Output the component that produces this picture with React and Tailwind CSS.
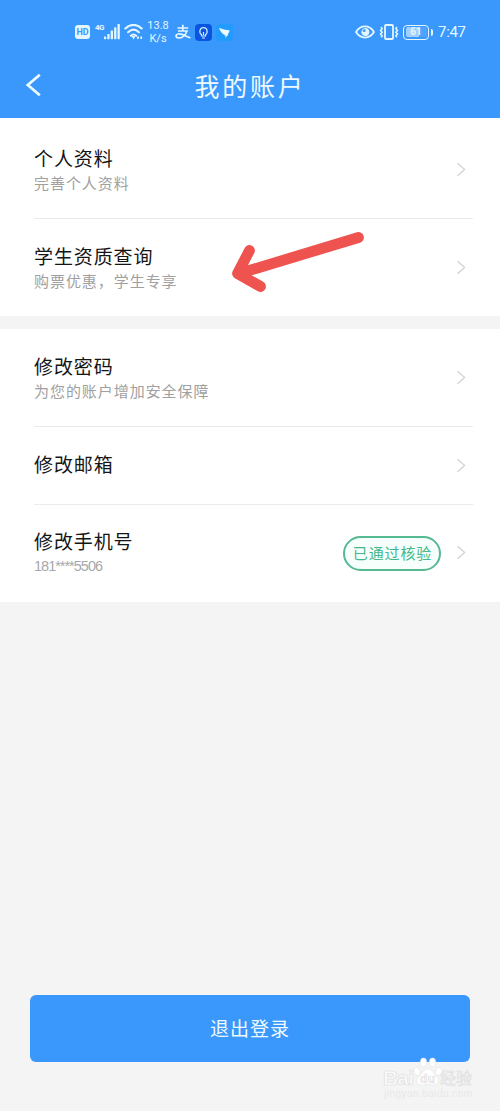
const FONT = "font-['Noto_Sans_CJK_SC','Liberation_Sans',sans-serif]";

function Chevron() {
  return (
    <svg className="h-4 w-[10px] shrink-0" viewBox="0 0 10 16" fill="none" stroke="#d4d4d4" strokeWidth="1.4">
      <path d="M1.6 1.2 L8.6 7.5 L1.6 13.8" />
    </svg>
  );
}

function StatusBar() {
  return (
    <div className="flex h-16 items-center justify-between pl-[75px] pr-[34px] text-[#e4f7ff]">
      <div className="flex items-center">
        <span className="flex h-[14px] w-[15px] items-center justify-center rounded-[3px] bg-[#e4f7ff] font-['Roboto',sans-serif] text-[9px] font-bold leading-none text-[#3a98fc]">HD</span>
        <span className="ml-[5px] mb-[8px] w-[9px] font-['Roboto',sans-serif] text-[8px] font-bold leading-none tracking-[-0.5px]">4G</span>
        <svg className="h-4 w-4 shrink-0" viewBox="0 0 16 16" fill="currentColor">
          <rect x="0" y="12.5" width="2.2" height="2.7" rx=".6" />
          <rect x="3.3" y="10" width="2.3" height="5.2" rx=".6" />
          <rect x="6.7" y="6.5" width="2.3" height="8.7" rx=".6" />
          <rect x="10.1" y="3.3" width="2.3" height="11.9" rx=".6" />
          <rect x="13.5" y="0" width="2.3" height="15.2" rx=".6" />
        </svg>
        <svg className="ml-[4px] h-4 w-5 shrink-0" viewBox="0 0 20 16" fill="none" stroke="currentColor" strokeWidth="2.1" strokeLinecap="round">
          <path d="M1.3 4.5 C6.2 -.3 12.8 -.3 17.7 4.5" />
          <path d="M4.1 8.2 C7.5 5 11.5 5 14.9 8.2" />
          <path d="M6.8 11.7 C8.6 10.1 10.4 10.1 12.2 11.7" />
          <path d="M7.6 12 H11.4 L9.5 15.4 Z" fill="currentColor" stroke="none" />
          <path d="M14 13.2 V14.2 M17.2 13.2 V14.2" strokeWidth="1.8" />
        </svg>
        <span className="ml-[2px] w-[24px] text-center font-['Roboto',sans-serif] text-[11px] leading-[13px]">13.8<br />K/s</span>
        <svg className="ml-[5px] h-4 w-4 shrink-0" viewBox="0 0 16 16" fill="none" stroke="currentColor" strokeWidth="1.7">
          <path d="M2.5 4 H13.2 M7.8 .8 V7 M3 7 H12 C10.6 11 7.2 14 3.7 14 C.4 14 .2 10.6 3 10 C7 9.2 10.8 12.4 15.4 13.8" />
        </svg>
        <svg className="ml-1 h-[17px] w-[17px] shrink-0" viewBox="0 0 17 17" fill="none">
          <rect width="17" height="17" rx="4" fill="#0a55e0" />
          <path d="M6.5 10.7 C3.6 8.5 4.7 3.7 8.5 3.7 C12.3 3.7 13.4 8.5 10.5 10.7 V12 H6.5 Z M7 14 H10 M8.5 8 V11" stroke="#d5f0ff" strokeWidth="1.2" />
        </svg>
        <svg className="ml-[4px] h-[17px] w-[17px] shrink-0" viewBox="0 0 17 17">
          <rect width="17" height="17" rx="4" fill="#219bfd" />
          <path d="M3.2 3.7 C6 5 10 6 13.4 6.2 C13.8 7.8 12.5 9.4 11.5 10.3 H12.6 L9.1 14 L9.7 11.6 H8.2 L8.8 10.5 C6.6 10.3 5.6 9.1 5.4 8 C4.2 7 3.6 5.6 3.2 3.7 Z" fill="#eefaff" />
        </svg>
      </div>
      <div className="flex items-center">
        <svg className="h-[14px] w-5 shrink-0" viewBox="0 0 20 14" fill="none" stroke="currentColor" strokeWidth="1.8">
          <path d="M1 7 C5.7-.4 14.3-.4 19 7 C14.3 14.4 5.7 14.4 1 7 Z" />
          <path d="M10.4 3.2 L10.4 7 L6.6 6.4 A3.8 3.8 0 1 0 10.4 3.2 Z" fill="currentColor" stroke="none" />
          <circle cx="10.4" cy="7" r="3.5" strokeWidth="1" />
        </svg>
        <svg className="ml-1 h-4 w-5 shrink-0" viewBox="0 0 20 16" fill="none" stroke="currentColor" strokeWidth="1.8">
          <rect x="6" y="1" width="8" height="14" rx="1" />
          <path d="M2 3 L3.2 4.7 L1.5 6.5 L3.2 8.2 L1.5 10 L3.2 11.7 L2 13.2 M18 3 L16.8 4.7 L18.5 6.5 L16.8 8.2 L18.5 10 L16.8 11.7 L18 13.2" strokeWidth="1.5" />
        </svg>
        <div className="ml-1 flex h-[15px] w-[26px] items-center rounded-[4px] border-[1.5px] border-current p-[1.5px]">
          <span className="flex h-full w-full items-center justify-center rounded-[2px] bg-[linear-gradient(90deg,#a3cffd_60%,#4ea3fc_60%)] font-['Roboto',sans-serif] text-[10px] font-bold leading-none">61</span>
        </div>
        <span className="ml-[2px] h-[7px] w-[2px] rounded-r-sm bg-[#e4f7ff]" />
        <span className="ml-[5px] w-7 font-['Roboto',sans-serif] text-[15px] leading-none tracking-[-0.3px]">7:47</span>
      </div>
    </div>
  );
}

function Row({ title, subtitle, height, divider, badge, pad = "" }) {
  return (
    <div className={`ml-[34px] mr-[27px] flex items-center pr-[7px] ${height} ${pad} ${divider ? "border-b border-[#ebebeb]" : ""}`}>
      <div className="flex flex-1 flex-col">
        <span className="text-[19px] leading-[26px] tracking-[0.9px] text-[#151515]">{title}</span>
        {subtitle}
      </div>
      {badge}
      <Chevron />
    </div>
  );
}

function Sub({ children }) {
  return <span className="text-[15px] leading-6 tracking-[0.95px] text-[#a0a0a0]">{children}</span>;
}

function Watermark() {
  return (
    <div className="absolute left-[383px] top-[1056px] h-[48px] w-[95px]">
      <svg className="h-full w-full" viewBox="0 0 95 48">
        <g fill="#ffffff" stroke="#e2e2e2" strokeWidth=".6">
          <ellipse cx="34" cy="15.5" rx="3" ry="4.3" transform="rotate(-20 34 15.5)" />
          <ellipse cx="40.5" cy="6.5" rx="3.2" ry="4.4" />
          <ellipse cx="49.5" cy="6.5" rx="3.2" ry="4.4" />
          <ellipse cx="55.5" cy="15.5" rx="3" ry="4.3" transform="rotate(20 55.5 15.5)" />
          <path d="M45 13 C50 13 51 18 54 21 C58 26 54 30 49 29 Q45 28 41 29 C35 30 31 26 36 20 C39 18 40 13 45 13 Z" />
        </g>
        <g fill="#fafafa" stroke="#dcdcdc" strokeWidth=".6" fontFamily="Liberation Sans, sans-serif" fontWeight="bold">
          <text x="0" y="29" fontSize="21" textLength="31">Bai</text>
          <text x="37" y="27" fontSize="12" textLength="15">du</text>
          <text x="57" y="28" fontSize="16" textLength="32" fontFamily="Noto Sans CJK SC, sans-serif" fontWeight="400">经验</text>
        </g>
        <text x="1" y="41" fontSize="10" textLength="88" fill="#e8e8e8" fontFamily="Liberation Sans, sans-serif">jingyan.baidu.com</text>
      </svg>
    </div>
  );
}

export default function App() {
  return (
    <div className={`relative flex h-[1111px] w-[500px] flex-col overflow-hidden bg-[#f4f4f4] ${FONT}`}>
      <header className="h-[118px] shrink-0 bg-[#3a98fc]">
        <StatusBar />
        <div className="flex h-[42px] items-center pl-[25px] pr-[43px]">
          <svg className="h-6 w-[18px] shrink-0" viewBox="0 0 18 24" fill="none" stroke="#f0fbff" strokeWidth="2.7">
            <path d="M14.8 1.8 L2.8 12 L14.8 22.2" />
          </svg>
          <h1 className="flex-1 text-center text-[25px] leading-none tracking-[2.7px] text-[#effaff]">我的账户</h1>
        </div>
      </header>

      <section className="bg-white">
        <Row title="个人资料" subtitle={<Sub>完善个人资料</Sub>} height="h-[101px]" pad="pt-[4px]" divider />
        <Row title="学生资质查询" subtitle={<Sub>购票优惠，学生专享</Sub>} height="h-[97px]" />
      </section>

      <section className="mt-[13px] bg-white">
        <Row title="修改密码" subtitle={<Sub>为您的账户增加安全保障</Sub>} height="h-[98px]" divider />
        <Row title="修改邮箱" subtitle={<span className="h-1" />} height="h-[78px]" divider />
        <Row
          title="修改手机号"
          subtitle={<span className="font-['Liberation_Sans',sans-serif] text-[14.5px] leading-6 tracking-[-1px] text-[#a8a8a8]">181****5506</span>}
          height="h-[97px]"
          pad="pb-px"
          badge={
            <span className="mr-[15px] flex h-[35px] w-[98px] items-center justify-center rounded-full border-2 border-[#55b992] bg-[#f6fffc] pb-px pl-px text-[15px] leading-none tracking-[0.9px] text-[#45b78a]">
              已通过核验
            </span>
          }
        />
      </section>

      <button className="mx-[30px] mb-[49px] mt-auto h-[67px] rounded-[6px] bg-[#3a98fc] text-[19px] tracking-[1px] text-[#effaff]">
        退出登录
      </button>

      <svg className="absolute left-[225px] top-[225px] h-[75px] w-[145px]" viewBox="225 225 145 75" fill="none" stroke="#ef5350" strokeWidth="10.8" strokeLinecap="round" strokeLinejoin="round">
        <path d="M358.5 237.5 L241 273 M249.5 250.5 L237.5 273.5 L260.5 286.5" />
      </svg>
      <Watermark />
    </div>
  );
}
